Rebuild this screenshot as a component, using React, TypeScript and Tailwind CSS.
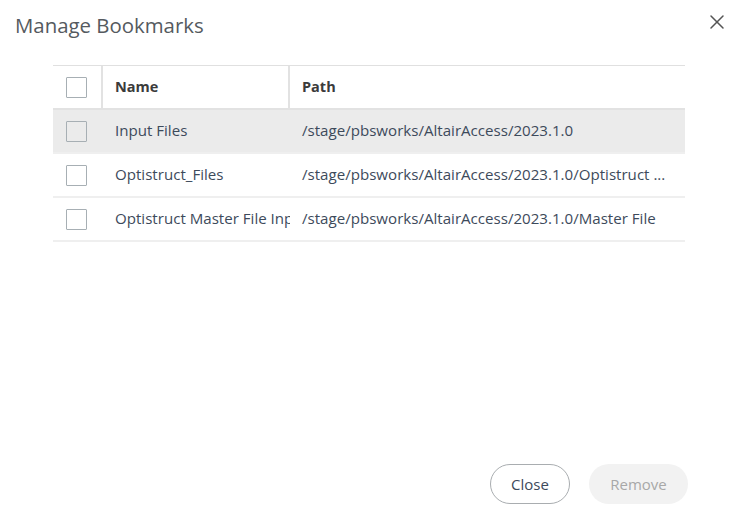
import { X } from "lucide-react";

type Bookmark = {
  name: string;
  path: string;
};

const bookmarks: Bookmark[] = [
  { name: "Input Files", path: "/stage/pbsworks/AltairAccess/2023.1.0" },
  { name: "Optistruct_Files", path: "/stage/pbsworks/AltairAccess/2023.1.0/Optistruct ..." },
  { name: "Optistruct Master File Input", path: "/stage/pbsworks/AltairAccess/2023.1.0/Master File" },
];

function Checkbox() {
  return <div className="w-[21px] h-[21px] border border-[#a7afb4] rounded-[1px] bg-transparent" />;
}

export default function App() {
  return (
    <div
      className="relative h-[526px] w-[737px] bg-white flex flex-col"
      style={{ fontFamily: '"Open Sans", "Noto Sans", sans-serif' }}
    >
      {/* Header */}
      <div className="flex items-start justify-between pl-[15px] pr-[8px] pt-[10px] h-[65px]">
        <h2 className="text-[20.4px] leading-[30px] text-[#555a60]">Manage Bookmarks</h2>
        <button type="button" className="text-[#555]">
          <X className="w-[24px] h-[24px]" strokeWidth={1.5} />
        </button>
      </div>

      {/* Table */}
      <div className="mx-[53px] w-[632px] border-t border-[#e0e0e0] text-[15.1px]">
        <div className="flex h-[44px] border-b-2 border-[#e2e2e2]">
          <div className="w-[50px] flex items-center pl-[13px] border-r-2 border-[#e2e2e2]">
            <Checkbox />
          </div>
          <div className="w-[187px] flex items-center pl-[12px] border-r-2 border-[#e2e2e2] font-bold text-[#3b3b3b] text-[14.5px]">
            Name
          </div>
          <div className="flex-1 flex items-center pl-[12px] font-bold text-[#3b3b3b] text-[14.5px]">Path</div>
        </div>
        {bookmarks.map((b, i) => (
          <div
            key={b.name}
            className={`flex h-[44px] border-b-2 border-[#efefef] ${i === 0 ? "bg-[#ebebeb]" : ""}`}
          >
            <div className="w-[50px] flex items-center pl-[13px]">
              <Checkbox />
            </div>
            <div className="w-[187px] flex items-center pl-[12px] pr-[2px] pb-[2px] text-[#3d4a5b] overflow-hidden whitespace-nowrap">
              {b.name}
            </div>
            <div className="flex-1 flex items-center pl-[12px] pb-[2px] text-[#3d4a5b] whitespace-nowrap overflow-hidden">
              {b.path}
            </div>
          </div>
        ))}
      </div>

      <div className="flex-1" />

      {/* Footer */}
      <div className="flex justify-end gap-[19px] pr-[49px] pb-[22px]">
        <button
          type="button"
          className="h-[40px] w-[80px] rounded-full border border-[#a9adb0] text-[15px] text-[#3d4a5b]"
        >
          Close
        </button>
        <button
          type="button"
          className="h-[40px] w-[99px] rounded-full bg-[#f2f2f2] text-[15px] text-[#a8a8a8]"
        >
          Remove
        </button>
      </div>
    </div>
  );
}
